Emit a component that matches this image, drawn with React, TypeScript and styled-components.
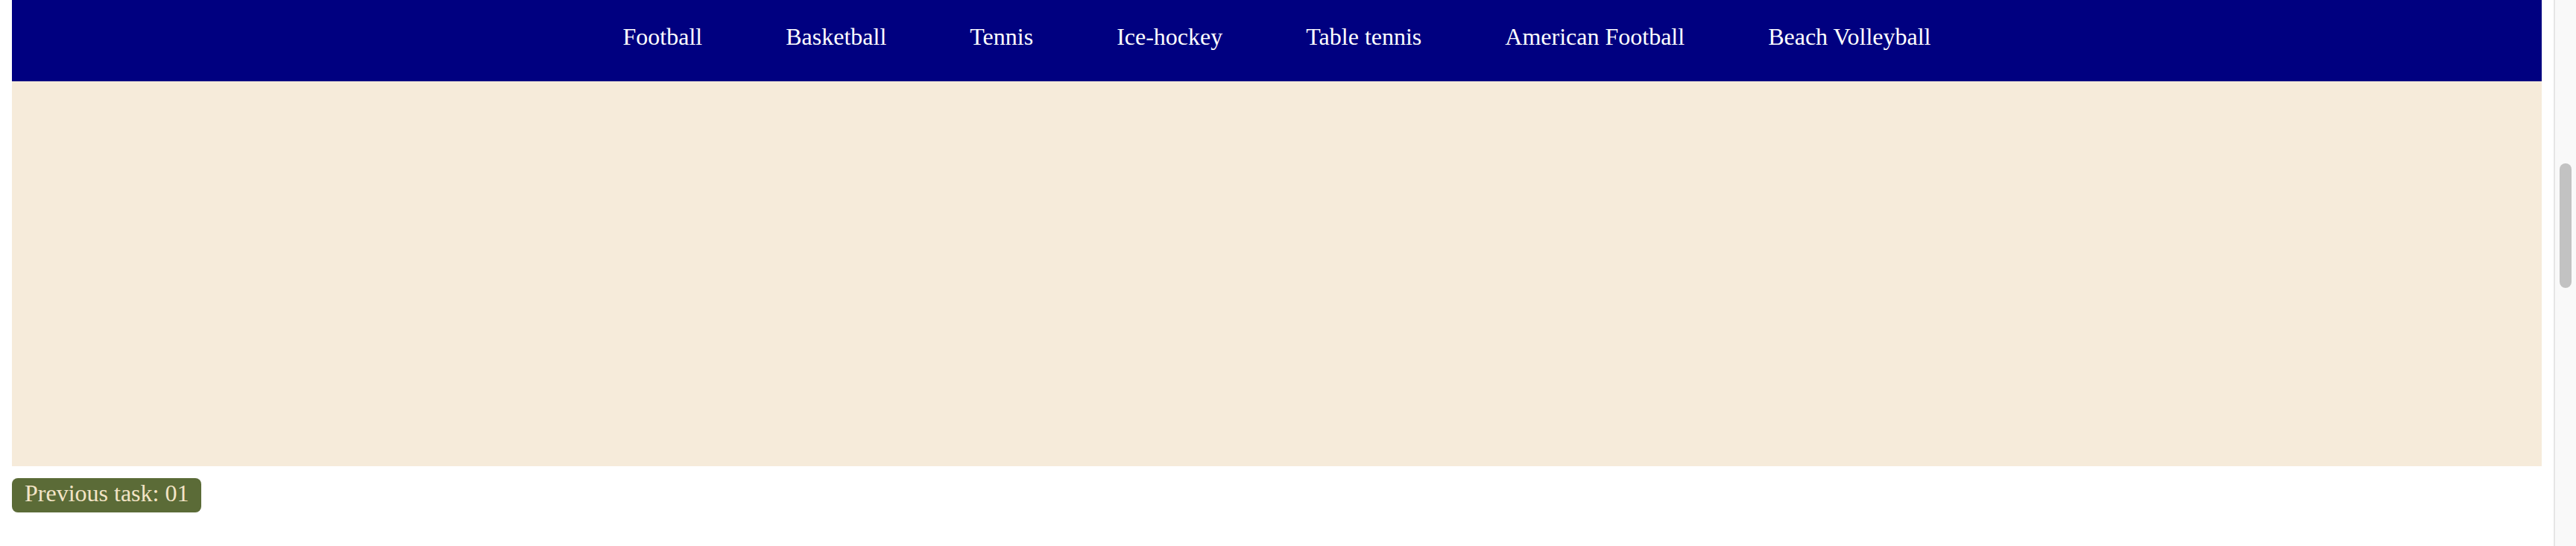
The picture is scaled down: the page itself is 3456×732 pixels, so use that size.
import React from "react";
import styled, { createGlobalStyle } from "styled-components";

const GlobalStyle = createGlobalStyle`
    html, body {
        margin:0;
        padding:0;
        height:732px;
        overflow:hidden;
        background:#ffffff;
        font-family:"Liberation Serif", "Times New Roman", serif;
    }
`

const Screen = styled.div`
    display:flex;
    height:732px;
    width:100%;
`

const Page = styled.div`
    flex:1;
    min-width:0;
    padding:0 16px;
    display:flex;
    flex-direction:column;
`

const NavBar = styled.nav`
    height:109px;
    box-sizing:border-box;
    padding-top:31px;
    background-color:#000080;
    display:flex;
    justify-content:center;
    align-items:flex-start;
    gap:112px;
`

const NavItem = styled.a`
    color:#ffffff;
    font-size:32px;
    line-height:37px;
    text-decoration:none;
    white-space:nowrap;
    cursor:pointer;
`

const Stage = styled.div`
    height:516px;
    background-color:#f6ebda;
`

const Footer = styled.div`
    padding-top:16px;
    display:flex;
`

const TaskButton = styled.div`
    background-color:#5b6b37;
    color:#f3e4c6;
    font-size:32px;
    line-height:37px;
    height:46px;
    box-sizing:border-box;
    padding:2px 17px 7px;
    border-radius:8px;
    white-space:nowrap;
`

const ScrollTrack = styled.div`
    width:30px;
    flex-shrink:0;
    box-sizing:border-box;
    border-left:2px solid #e6e6e6;
    background-color:#f9f9f9;
    padding-top:219px;
    display:flex;
    justify-content:center;
`

const ScrollThumb = styled.div`
    width:16px;
    height:167px;
    border-radius:8px;
    background-color:#c2c2c2;
`

const sports = ["Football", "Basketball", "Tennis", "Ice-hockey", "Table tennis", "American Football", "Beach Volleyball"]

export default function App() {
    return (
        <Screen>
            <GlobalStyle />
            <Page>
                <NavBar>
                    {
                        sports.map((name) => (<NavItem key={name}>{name}</NavItem>))
                    }
                </NavBar>
                <Stage />
                <Footer>
                    <TaskButton>Previous task: 01</TaskButton>
                </Footer>
            </Page>
            <ScrollTrack>
                <ScrollThumb />
            </ScrollTrack>
        </Screen>
    );
}
